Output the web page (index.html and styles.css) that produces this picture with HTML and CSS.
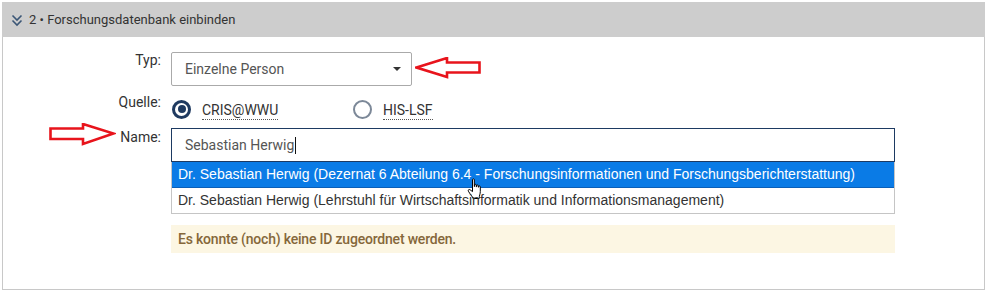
FILE: index.html
```html
<!DOCTYPE html>
<html lang="de">
<head>
    <meta charset="UTF-8">
    <meta name="viewport" content="width=device-width, initial-scale=1.0">
    <title>Forschungsdatenbank einbinden</title>
    <link rel="stylesheet" href="styles.css">
</head>
<body>
    <div class="panel">
        <div class="panel-head">
            <svg class="chev" width="12" height="13" viewBox="0 0 12 13">
                <path d="M1.5 1.5 L6 6 L10.5 1.5 M1.5 6.5 L6 11 L10.5 6.5" fill="none" stroke="#3b5676" stroke-width="1.6"/>
            </svg>
            <span>2 &bull; Forschungsdatenbank einbinden</span>
        </div>
        <div class="panel-body">
            <div class="row row-typ">
                <label class="lbl">Typ:</label>
                <div class="field">
                    <div class="select">
                        <span>Einzelne Person</span>
                        <span class="caret"></span>
                    </div>
                    <svg class="arrow-left" width="68" height="22" viewBox="0 0 68 22">
                        <path d="M1.5 10.5 L32 1 L32 5.5 L64.5 5.5 L64.5 15.5 L32 15.5 L32 20 Z" fill="#fff" stroke="#e8141c" stroke-width="2.6" stroke-linejoin="miter"/>
                    </svg>
                </div>
            </div>

            <div class="row row-quelle">
                <label class="lbl">Quelle:</label>
                <div class="field radios">
                    <div class="radio-opt">
                        <span class="radio checked"></span>
                        <span class="radio-text">CRIS@WWU</span>
                    </div>
                    <div class="radio-opt">
                        <span class="radio"></span>
                        <span class="radio-text">HIS-LSF</span>
                    </div>
                </div>
            </div>

            <div class="row row-name">
                <label class="lbl lbl-name">
                    <svg class="arrow-right" width="68" height="24" viewBox="0 0 68 24">
                        <path d="M2.5 5.5 L35 5.5 L35 1 L65.5 10.5 L35 21 L35 16 L2.5 16 Z" fill="#fff" stroke="#e8141c" stroke-width="2.6"/>
                    </svg>
                    <span>Name:</span>
                </label>
                <div class="field field-col">
                    <div class="input">Sebastian Herwig<span class="text-caret"></span></div>
                    <ul class="suggest">
                        <li class="active">Dr. Sebastian Herwig (Dezernat 6 Abteilung 6.4 - Forschungsinformationen und Forschungsberichterstattung)
                            <svg class="hand" width="20" height="22" viewBox="0 0 20 22">
                                <path d="M6.5 1.6 C6.5 0.6 8.3 0.6 8.3 1.6 L8.3 8.5 L8.6 8.5 L8.6 7 C8.6 6.1 10.3 6.1 10.3 7 L10.3 8.8 L10.6 8.8 L10.6 7.6 C10.6 6.8 12.3 6.8 12.3 7.6 L12.3 9.2 L12.6 9.2 L12.6 8.6 C12.6 7.8 14.3 7.8 14.3 8.6 L14.3 13.5 C14.3 16 13.2 17.5 13.2 20.5 L7 20.5 C7 19 3.5 15.5 2.4 13.2 C1.8 11.9 3 11 4.1 11.8 L6.5 13.6 Z" fill="#fff" stroke="#000" stroke-width="1"/>
                            </svg>
                        </li>
                        <li>Dr. Sebastian Herwig (Lehrstuhl für Wirtschaftsinformatik und Informationsmanagement)</li>
                    </ul>
                    <div class="notice">Es konnte (noch) keine ID zugeordnet werden.</div>
                </div>
            </div>
        </div>
    </div>
</body>
</html>
```

FILE: styles.css
```css
body {
    margin: 2px;
    font-family: Roboto, "Liberation Sans", Arial, sans-serif;
    font-size: 14px;
    color: #333;
    background: #fff;
}
.panel {
    width: 983px;
    height: 288px;
    box-sizing: border-box;
    border: 1px solid #c8c8c8;
    border-top: none;
}
.panel-head {
    margin: 0 -1px;
    height: 35px;
    background-color: #cdcdcd;
    display: flex;
    align-items: center;
    padding-left: 9px;
    font-size: 13px;
    color: #333;
}
.panel-head .chev {
    margin-right: 6px;
    margin-top: 1px;
}
.panel-body {
    padding-top: 15px;
}
.row {
    display: flex;
    align-items: flex-start;
}
.lbl {
    width: 158px;
    margin-right: 10px;
    text-align: right;
    line-height: 16px;
    color: #333;
}
.field {
    display: flex;
    align-items: center;
}
.select {
    width: 241px;
    height: 34px;
    box-sizing: border-box;
    border: 1px solid #aaa;
    border-radius: 2px;
    padding: 0 8px 0 13px;
    display: flex;
    align-items: center;
    justify-content: space-between;
    color: #555;
}
.caret {
    width: 0;
    height: 0;
    border-left: 4px solid transparent;
    border-right: 4px solid transparent;
    border-top: 4px solid #333;
    margin-right: 2px;
}
.arrow-left {
    margin-left: 3px;
    margin-top: -2px;
}
.row-quelle {
    margin-top: 8px;
}
.radios {
    padding-top: 4px;
}
.radio-opt {
    width: 181px;
    display: flex;
    align-items: center;
}
.radio {
    width: 19px;
    height: 19px;
    box-sizing: border-box;
    border-radius: 50%;
    border: 2px solid #7c8898;
    margin-left: 1px;
    margin-right: 11px;
    display: flex;
    align-items: center;
    justify-content: center;
}
.radio.checked {
    border: 3px solid #1f3a60;
}
.radio.checked::after {
    content: "";
    width: 8px;
    height: 8px;
    border-radius: 50%;
    background: #1f3a60;
}
.radio-text {
    line-height: 18px;
    border-bottom: 1px dotted #555;
    color: #333;
    margin-top: 3px;
}
.row-name {
    margin-top: 8px;
}
.lbl-name {
    display: flex;
    justify-content: space-between;
    align-items: flex-start;
    padding-left: 45px;
    box-sizing: border-box;
    margin-top: 1px;
}
.lbl-name .arrow-right {
    margin-top: -6px;
}
.field-col {
    flex-direction: column;
    align-items: stretch;
    width: 724px;
}
.input {
    height: 34px;
    box-sizing: border-box;
    border: 1px solid #1d3a62;
    padding: 0 13px;
    display: flex;
    align-items: center;
    color: #555;
}
.text-caret {
    display: inline-block;
    width: 1px;
    height: 17px;
    background: #111;
    margin-left: 1px;
}
.suggest {
    list-style: none;
    margin: 0;
    padding: 0;
    border: 1px solid #c5c5c5;
    border-top: none;
    font-family: "Liberation Sans", Arial, sans-serif;
    font-size: 14px;
}
.suggest li {
    position: relative;
    height: 25px;
    line-height: 25px;
    padding-left: 6px;
    color: #333;
}
.suggest li.active {
    background-color: #0a7be6;
    color: #fff;
    border-bottom: 1px solid #0a5fb8;
}
.suggest .hand {
    position: absolute;
    left: 294px;
    top: 16px;
}
.notice {
    margin-top: 11px;
    height: 28px;
    background-color: #fcf6e3;
    color: #85673a;
    font-weight: 500;
    font-size: 14px;
    letter-spacing: -0.2px;
    padding-left: 7px;
    display: flex;
    align-items: center;
}
```
